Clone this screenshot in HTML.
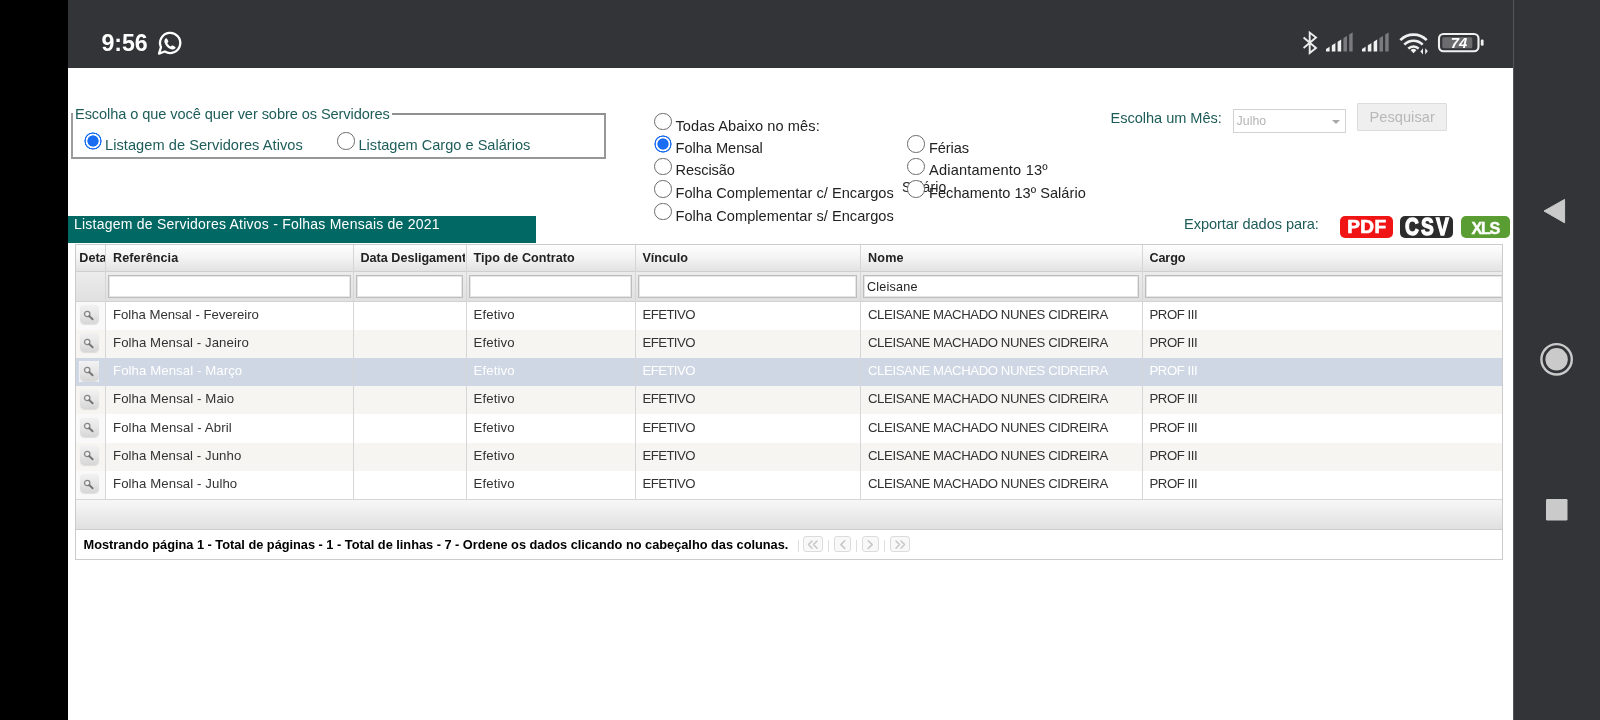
<!DOCTYPE html>
<html><head><meta charset="utf-8"><title>Servidores</title>
<style>
*{box-sizing:border-box;margin:0;padding:0}
html,body{width:1600px;height:720px;overflow:hidden;background:#fff;font-family:"Liberation Sans",sans-serif;}
.abs{position:absolute}
#left{left:0;top:0;width:68px;height:720px;background:#000}
#top{left:68px;top:0;width:1532px;height:68px;background:#333438}
#right{left:1513px;top:0;width:87px;height:720px;background:#333438;border-left:1.5px solid #55565c}
.t{position:absolute;white-space:pre;line-height:1}
.radio{position:absolute;width:17.5px;height:17.5px;border-radius:50%;border:1.2px solid #6a6a6a;background:#fff}
.radio.on{border:none;background:radial-gradient(circle at 50% 50%,#1a6df2 0,#1a6df2 5.3px,#fff 5.9px,#fff 7px,#1a6df2 7.6px,#1a6df2 8.3px,rgba(26,109,242,0) 8.9px)}
.inp{position:absolute;top:274.5px;height:23.5px;background:#fff;border:1.5px solid #bdbdbd;box-shadow:inset 0 0 0 1px #e6e6e6}
.ib{position:absolute;left:79.5px;width:19px;height:19px;border-radius:4.5px;background:linear-gradient(#f1f1f1,#e6e6e6 50%,#d6d6d6);box-shadow:0 0.5px 1px rgba(0,0,0,.10)}
.pb{position:absolute;top:536.2px;height:16.3px;border:1.3px solid #dcdcdc;border-radius:3px;background:#f8f8f8}
.ps{position:absolute;top:539.5px;width:1.3px;height:12px;background:#dedede}
</style></head><body><div id="wrap" style="position:absolute;left:0;top:0;width:1600px;height:720px;will-change:transform">
<div id="left" class="abs"></div>
<div id="top" class="abs"></div>
<div id="right" class="abs"></div>

<!-- status icons -->
<svg class="abs" style="left:0;top:0" width="1600" height="720" viewBox="0 0 1600 720">
  <!-- whatsapp -->
  <g transform="translate(-1.2 0.6)"><g fill="none" stroke="#fff" stroke-width="2.3" stroke-linejoin="round">
    <path d="M160.2 53 L162.2 46.6 A10.1 10.1 0 1 1 166 50.9 Z"/>
  </g>
  <path transform="translate(171.2 41.8) scale(0.88) translate(-171.2 -41.8)" d="M166 37.6 c0.6 -0.6 1.6 -0.5 2 0.2 l1.2 2.4 c0.3 0.6 0.1 1.2 -0.4 1.6 l-0.8 0.7 c0.8 1.8 2.3 3.2 4.2 4.1 l0.8 -0.9 c0.4 -0.5 1.1 -0.6 1.6 -0.3 l2.3 1.3 c0.7 0.4 0.8 1.4 0.2 2 c-1.2 1.3 -3 1.6 -4.7 0.9 c-3.6 -1.4 -6.3 -4.2 -7.4 -7.8 c-0.5 -1.6 -0.1 -3.2 1 -4.2z" fill="#fff"/></g>
  <!-- bluetooth -->
  <path d="M1303.6 37.6 L1316 48 L1309.7 53 L1309.7 32.6 L1316 37.6 L1303.6 48" fill="none" stroke="#ececec" stroke-width="1.9" stroke-linejoin="miter"/>
  <!-- signal 1 -->
  <g>
    <clipPath id="s1"><path d="M1326 51.6 L1326 48.9 L1352.8 32.2 L1352.8 51.6 Z"/></clipPath>
    <g clip-path="url(#s1)">
      <rect x="1326" y="30" width="3.6" height="22" fill="#f0f0f0"/>
      <rect x="1331.8" y="30" width="3.6" height="22" fill="#f0f0f0"/>
      <rect x="1337.6" y="30" width="3.6" height="22" fill="#f0f0f0"/>
      <rect x="1343.4" y="30" width="3.6" height="22" fill="#7b7b7d"/>
      <rect x="1349.2" y="30" width="3.6" height="22" fill="#7b7b7d"/>
    </g>
    <clipPath id="s2"><path d="M1362 51.6 L1362 48.9 L1388.8 32.2 L1388.8 51.6 Z"/></clipPath>
    <g clip-path="url(#s2)">
      <rect x="1362" y="30" width="3.6" height="22" fill="#f0f0f0"/>
      <rect x="1367.8" y="30" width="3.6" height="22" fill="#f0f0f0"/>
      <rect x="1373.6" y="30" width="3.6" height="22" fill="#f0f0f0"/>
      <rect x="1379.4" y="30" width="3.6" height="22" fill="#7b7b7d"/>
      <rect x="1385.2" y="30" width="3.6" height="22" fill="#7b7b7d"/>
    </g>
  </g>
  <!-- wifi -->
  <g fill="none" stroke="#f0f0f0" stroke-width="2.6" stroke-linecap="butt">
    <path d="M1400.3 40.2 A18.5 18.5 0 0 1 1426.7 40.2"/>
    <path d="M1404.3 44.6 A12.8 12.8 0 0 1 1422.7 44.6"/>
    <path d="M1408.3 48.7 A7.2 7.2 0 0 1 1418.7 48.7"/>
  </g>
  <path d="M1413.5 53.2 L1410.6 50.2 A4.1 4.1 0 0 1 1416.4 50.2 Z" fill="#f0f0f0"/>
  <rect x="1419.5" y="46.5" width="10" height="9" fill="#333438"/>
  <path d="M1423 48.2 v6.2 l-2.6 -2.8z M1425.2 54.4 v-6.2 l2.6 2.8z" fill="#f0f0f0"/>
  <!-- battery -->
  <rect x="1439" y="34" width="39.5" height="17.3" rx="4.5" fill="none" stroke="#f0f0f0" stroke-width="2.1"/>
  <rect x="1442.3" y="37.2" width="30" height="11" rx="1.5" fill="#6c6c6e"/>
  <rect x="1480.8" y="39.6" width="2.8" height="6.2" rx="1.2" fill="#f0f0f0"/>
  <!-- nav -->
  <path d="M1544 211 L1564.6 199.4 L1564.6 222.8 Z" fill="#cacaca" stroke="#cacaca" stroke-width="1" stroke-linejoin="round"/>
  <circle cx="1556.6" cy="359.3" r="15.2" fill="none" stroke="#cacaca" stroke-width="2.4"/>
  <circle cx="1556.6" cy="359.3" r="11.2" fill="#cacaca"/>
  <rect x="1546" y="499" width="21.5" height="21.5" rx="1.2" fill="#cacaca"/>
</svg>

<!-- fieldset -->
<div class="abs" style="left:71px;top:113.2px;width:535px;height:45.6px;border:2px solid #979797;border-left-color:#9d9d9d;border-top-color:#909090"></div>
<div class="abs" style="left:73px;top:108px;width:318.6px;height:12px;background:#fff"></div>
<div class="radio on" style="left:84px;top:132px"></div>
<div class="radio" style="left:337px;top:132px"></div>

<!-- middle radios -->
<div class="radio" style="left:654px;top:112.5px"></div>
<div class="radio on" style="left:654px;top:135px"></div>
<div class="radio" style="left:654px;top:157.5px"></div>
<div class="radio" style="left:654px;top:180px"></div>
<div class="radio" style="left:654px;top:202.5px"></div>
<div class="radio" style="left:907px;top:135px"></div>
<div class="radio" style="left:907px;top:157.5px"></div>
<div class="radio" style="left:907px;top:180px;z-index:5"></div>

<!-- select + button -->
<div class="abs" style="left:1232.5px;top:108.5px;width:113.5px;height:24.5px;border:1.5px solid #d2d2d2;background:#fff"></div>
<div class="abs" style="left:1331.5px;top:119.5px;width:0;height:0;border-left:4px solid transparent;border-right:4px solid transparent;border-top:4.5px solid #a8a8a8"></div>
<div class="abs" style="left:1357px;top:102.8px;width:89.5px;height:28.2px;border:1.5px solid #dcdcdc;background:#efefef;border-radius:1px"></div>

<!-- export buttons -->
<div class="abs" style="left:1340px;top:216.3px;width:52.8px;height:22px;background:#f01414;border-radius:5px"></div>
<div class="abs" style="left:1400.3px;top:216.3px;width:52.8px;height:22px;background:#2c2c2c;border-radius:5px"></div>
<div class="abs" style="left:1460.5px;top:216.3px;width:49.7px;height:22px;background:#5a9e33;border-radius:5px"></div>

<svg id="csv" class="abs" style="left:1400px;top:212px" width="56" height="30" viewBox="1400 212 56 30"><text transform="translate(1404.9 235.2) scale(0.8 1)" x="0" y="0" font-family="Liberation Sans, sans-serif" font-size="24" font-weight="bold" fill="#fff" stroke="#fff" stroke-width="1.3" textLength="55" lengthAdjust="spacing">CSV</text></svg>
<!-- title bar -->
<div class="abs" style="left:68px;top:216px;width:467.5px;height:26.8px;background:#026864"></div>

<!-- table -->
<div id="tbl" class="abs" style="left:75px;top:244px;width:1428px;height:316px;border:1px solid #ccc;background:#fff"></div>
<div class="abs" style="left:76px;top:245px;width:1426px;height:27.2px;background:linear-gradient(#fefefe,#f3f3f3 50%,#e2e2e2);border-bottom:1px solid #cfcfcf"></div>
<div class="abs" style="left:76px;top:272.2px;width:1426px;height:29.6px;background:linear-gradient(#ececec,#e0e0e0);border-bottom:1px solid #d2d2d2"></div>

<div class="abs" style="left:76px;top:301.80px;width:1426px;height:28.17px;background:#fff"></div>
<div class="abs" style="left:76px;top:301.80px;width:29px;height:28.17px;background:#f9f9f9"></div>
<div class="ib" style="top:305.20px"></div>
<svg class="abs" style="left:81.80px;top:308.60px" width="14" height="14" viewBox="0 0 14 14"><circle cx="5.2" cy="5" r="2.7" fill="#f0f0f0" stroke="#858585" stroke-width="1.3"/><path d="M7.3 7.1 L10.6 10.3" stroke="#737373" stroke-width="1.9" stroke-linecap="round"/></svg>
<div class="abs" style="left:76px;top:329.97px;width:1426px;height:28.17px;background:#f6f5f1"></div>
<div class="ib" style="top:333.37px"></div>
<svg class="abs" style="left:81.80px;top:336.77px" width="14" height="14" viewBox="0 0 14 14"><circle cx="5.2" cy="5" r="2.7" fill="#f0f0f0" stroke="#858585" stroke-width="1.3"/><path d="M7.3 7.1 L10.6 10.3" stroke="#737373" stroke-width="1.9" stroke-linecap="round"/></svg>
<div class="abs" style="left:76px;top:358.14px;width:1426px;height:28.17px;background:#cfd6e4"></div>
<div class="abs" style="left:78.6px;top:360.94px;width:20.8px;height:21px;background:rgba(255,255,255,.7)"></div>
<div class="ib" style="top:361.54px"></div>
<svg class="abs" style="left:81.80px;top:364.94px" width="14" height="14" viewBox="0 0 14 14"><circle cx="5.2" cy="5" r="2.7" fill="#f0f0f0" stroke="#858585" stroke-width="1.3"/><path d="M7.3 7.1 L10.6 10.3" stroke="#737373" stroke-width="1.9" stroke-linecap="round"/></svg>
<div class="abs" style="left:76px;top:386.31px;width:1426px;height:28.17px;background:#f6f5f1"></div>
<div class="ib" style="top:389.71px"></div>
<svg class="abs" style="left:81.80px;top:393.11px" width="14" height="14" viewBox="0 0 14 14"><circle cx="5.2" cy="5" r="2.7" fill="#f0f0f0" stroke="#858585" stroke-width="1.3"/><path d="M7.3 7.1 L10.6 10.3" stroke="#737373" stroke-width="1.9" stroke-linecap="round"/></svg>
<div class="abs" style="left:76px;top:414.48px;width:1426px;height:28.17px;background:#fff"></div>
<div class="abs" style="left:76px;top:414.48px;width:29px;height:28.17px;background:#f9f9f9"></div>
<div class="ib" style="top:417.88px"></div>
<svg class="abs" style="left:81.80px;top:421.28px" width="14" height="14" viewBox="0 0 14 14"><circle cx="5.2" cy="5" r="2.7" fill="#f0f0f0" stroke="#858585" stroke-width="1.3"/><path d="M7.3 7.1 L10.6 10.3" stroke="#737373" stroke-width="1.9" stroke-linecap="round"/></svg>
<div class="abs" style="left:76px;top:442.65px;width:1426px;height:28.17px;background:#f6f5f1"></div>
<div class="ib" style="top:446.05px"></div>
<svg class="abs" style="left:81.80px;top:449.45px" width="14" height="14" viewBox="0 0 14 14"><circle cx="5.2" cy="5" r="2.7" fill="#f0f0f0" stroke="#858585" stroke-width="1.3"/><path d="M7.3 7.1 L10.6 10.3" stroke="#737373" stroke-width="1.9" stroke-linecap="round"/></svg>
<div class="abs" style="left:76px;top:470.82px;width:1426px;height:28.17px;background:#fff"></div>
<div class="abs" style="left:76px;top:470.82px;width:29px;height:28.17px;background:#f9f9f9"></div>
<div class="ib" style="top:474.22px"></div>
<svg class="abs" style="left:81.80px;top:477.62px" width="14" height="14" viewBox="0 0 14 14"><circle cx="5.2" cy="5" r="2.7" fill="#f0f0f0" stroke="#858585" stroke-width="1.3"/><path d="M7.3 7.1 L10.6 10.3" stroke="#737373" stroke-width="1.9" stroke-linecap="round"/></svg>
<div class="abs" style="left:105px;top:245px;width:1px;height:254.5px;background:#d6d6d6"></div>
<div class="abs" style="left:353px;top:245px;width:1px;height:254.5px;background:#d6d6d6"></div>
<div class="abs" style="left:466px;top:245px;width:1px;height:254.5px;background:#d6d6d6"></div>
<div class="abs" style="left:635px;top:245px;width:1px;height:254.5px;background:#d6d6d6"></div>
<div class="abs" style="left:860px;top:245px;width:1px;height:254.5px;background:#d6d6d6"></div>
<div class="abs" style="left:1142px;top:245px;width:1px;height:254.5px;background:#d6d6d6"></div>
<div class="abs" style="left:76px;top:499px;width:1426px;height:1px;background:#d6d6d6"></div>
<div class="abs" style="left:76px;top:500px;width:1426px;height:29.8px;background:linear-gradient(#f7f7f7,#ececec 50%,#e0e0e0);border-bottom:1px solid #cdcdcd"></div>
<div class="inp" style="left:108px;width:242.8px;"></div>
<div class="inp" style="left:356px;width:107.0px;"></div>
<div class="inp" style="left:469px;width:162.7px;"></div>
<div class="inp" style="left:638px;width:219.0px;"></div>
<div class="inp" style="left:863px;width:276.0px;"></div>
<div class="inp" style="left:1145px;width:357.0px;border-right:none;"></div>
<div class="pb" style="left:803px;width:20.0px"></div>
<div class="pb" style="left:834px;width:17.3px"></div>
<div class="pb" style="left:861.5px;width:17.3px"></div>
<div class="pb" style="left:890px;width:19.8px"></div>
<div class="ps" style="left:797.5px"></div>
<div class="ps" style="left:827.8px"></div>
<div class="ps" style="left:856px"></div>
<div class="ps" style="left:883.8px"></div>
<svg class="abs" style="left:800px;top:532px" width="120" height="26" viewBox="800 532 120 26" fill="none" stroke="#c6c6c6" stroke-width="1.5" stroke-linecap="round" stroke-linejoin="round">
<path d="M812 541 L808.5 544.6 L812 548.2 M817 541 L813.5 544.6 L817 548.2"/>
<path d="M844.8 540.8 L840.8 544.6 L844.8 548.4"/>
<path d="M868.2 540.8 L872.2 544.6 L868.2 548.4"/>
<path d="M896 541 L899.5 544.6 L896 548.2 M901 541 L904.5 544.6 L901 548.2"/>
</svg>
<div class="t" style="left:101.50px;top:32.46px;font-size:23.2px;color:#fff;font-weight:bold;letter-spacing:-0.105px;">9:56</div>
<div class="t" style="left:75.00px;top:107.14px;font-size:14.6px;color:#1d5c58;letter-spacing:-0.085px;">Escolha o que você quer ver sobre os Servidores</div>
<div class="t" style="left:105.00px;top:138.24px;font-size:14.6px;color:#1d5c58;letter-spacing:0.051px;">Listagem de Servidores Ativos</div>
<div class="t" style="left:358.50px;top:138.24px;font-size:14.6px;color:#1d5c58;letter-spacing:-0.007px;">Listagem Cargo e Salários</div>
<div class="t" style="left:675.50px;top:118.54px;font-size:14.6px;color:#222;letter-spacing:0.076px;">Todas Abaixo no mês:</div>
<div class="t" style="left:675.50px;top:140.84px;font-size:14.6px;color:#222;letter-spacing:-0.026px;">Folha Mensal</div>
<div class="t" style="left:675.50px;top:163.34px;font-size:14.6px;color:#222;letter-spacing:-0.091px;">Rescisão</div>
<div class="t" style="left:675.50px;top:186.04px;font-size:14.6px;color:#222;letter-spacing:0.030px;">Folha Complementar c/ Encargos</div>
<div class="t" style="left:675.50px;top:208.54px;font-size:14.6px;color:#222;letter-spacing:0.030px;">Folha Complementar s/ Encargos</div>
<div class="t" style="left:929.00px;top:140.84px;font-size:14.6px;color:#222;letter-spacing:-0.124px;">Férias</div>
<div class="t" style="left:929.00px;top:163.34px;font-size:14.6px;color:#222;letter-spacing:0.195px;">Adiantamento 13º</div>
<div class="t" style="left:902.00px;top:180.45px;font-size:14px;color:#222;letter-spacing:0.101px;">Salário</div>
<div class="t" style="left:929.00px;top:186.04px;font-size:14.6px;color:#222;letter-spacing:0.026px;">Fechamento 13º Salário</div>
<div class="t" style="left:1110.50px;top:110.94px;font-size:14.6px;color:#1d5c58;letter-spacing:-0.043px;">Escolha um Mês:</div>
<div class="t" style="left:1236.50px;top:115.09px;font-size:12.3px;color:#b4b4b4;letter-spacing:0.079px;">Julho</div>
<div class="t" style="left:1369.50px;top:110.44px;font-size:14.6px;color:#b8b8b8;letter-spacing:0.044px;">Pesquisar</div>
<div class="t" style="left:1184.00px;top:217.44px;font-size:14.6px;color:#1d5c58;letter-spacing:-0.075px;">Exportar dados para:</div>
<div class="t" style="left:74.00px;top:217.15px;font-size:14px;color:#fff;letter-spacing:0.232px;">Listagem de Servidores Ativos - Folhas Mensais de 2021</div>
<div class="t" style="left:79.30px;top:251.83px;font-size:12.6px;color:#222;font-weight:bold;width:25.7px;overflow:hidden;height:16.4px;">Detalhes</div>
<div class="t" style="left:113.00px;top:251.83px;font-size:12.6px;color:#222;font-weight:bold;letter-spacing:0.089px;">Referência</div>
<div class="t" style="left:360.50px;top:251.83px;font-size:12.6px;color:#222;font-weight:bold;width:104.5px;overflow:hidden;height:16.4px;">Data Desligamento</div>
<div class="t" style="left:473.50px;top:251.83px;font-size:12.6px;color:#222;font-weight:bold;letter-spacing:0.049px;">Tipo de Contrato</div>
<div class="t" style="left:642.50px;top:251.83px;font-size:12.6px;color:#222;font-weight:bold;letter-spacing:-0.026px;">Vínculo</div>
<div class="t" style="left:868.00px;top:251.83px;font-size:12.6px;color:#222;font-weight:bold;letter-spacing:0.200px;">Nome</div>
<div class="t" style="left:1149.50px;top:251.83px;font-size:12.6px;color:#222;font-weight:bold;letter-spacing:-0.118px;">Cargo</div>
<div class="t" style="left:867.00px;top:280.63px;font-size:12.6px;color:#222;letter-spacing:0.223px;">Cleisane</div>
<div class="t" style="left:113.00px;top:307.93px;font-size:13.2px;color:#333;letter-spacing:-0.033px;">Folha Mensal - Fevereiro</div>
<div class="t" style="left:473.50px;top:307.93px;font-size:13.2px;color:#333;letter-spacing:0.139px;">Efetivo</div>
<div class="t" style="left:642.50px;top:307.93px;font-size:13.2px;color:#333;letter-spacing:-0.589px;">EFETIVO</div>
<div class="t" style="left:868.00px;top:307.93px;font-size:13.2px;color:#333;letter-spacing:-0.420px;">CLEISANE MACHADO NUNES CIDREIRA</div>
<div class="t" style="left:1149.50px;top:307.93px;font-size:13.2px;color:#333;letter-spacing:-0.437px;">PROF III</div>
<div class="t" style="left:113.00px;top:336.10px;font-size:13.2px;color:#333;letter-spacing:0.075px;">Folha Mensal - Janeiro</div>
<div class="t" style="left:473.50px;top:336.10px;font-size:13.2px;color:#333;letter-spacing:0.139px;">Efetivo</div>
<div class="t" style="left:642.50px;top:336.10px;font-size:13.2px;color:#333;letter-spacing:-0.589px;">EFETIVO</div>
<div class="t" style="left:868.00px;top:336.10px;font-size:13.2px;color:#333;letter-spacing:-0.420px;">CLEISANE MACHADO NUNES CIDREIRA</div>
<div class="t" style="left:1149.50px;top:336.10px;font-size:13.2px;color:#333;letter-spacing:-0.437px;">PROF III</div>
<div class="t" style="left:113.00px;top:364.27px;font-size:13.2px;color:#fff;letter-spacing:0.088px;">Folha Mensal - Março</div>
<div class="t" style="left:473.50px;top:364.27px;font-size:13.2px;color:#fff;letter-spacing:0.139px;">Efetivo</div>
<div class="t" style="left:642.50px;top:364.27px;font-size:13.2px;color:#fff;letter-spacing:-0.589px;">EFETIVO</div>
<div class="t" style="left:868.00px;top:364.27px;font-size:13.2px;color:#fff;letter-spacing:-0.420px;">CLEISANE MACHADO NUNES CIDREIRA</div>
<div class="t" style="left:1149.50px;top:364.27px;font-size:13.2px;color:#fff;letter-spacing:-0.437px;">PROF III</div>
<div class="t" style="left:113.00px;top:392.44px;font-size:13.2px;color:#333;letter-spacing:0.096px;">Folha Mensal - Maio</div>
<div class="t" style="left:473.50px;top:392.44px;font-size:13.2px;color:#333;letter-spacing:0.139px;">Efetivo</div>
<div class="t" style="left:642.50px;top:392.44px;font-size:13.2px;color:#333;letter-spacing:-0.589px;">EFETIVO</div>
<div class="t" style="left:868.00px;top:392.44px;font-size:13.2px;color:#333;letter-spacing:-0.420px;">CLEISANE MACHADO NUNES CIDREIRA</div>
<div class="t" style="left:1149.50px;top:392.44px;font-size:13.2px;color:#333;letter-spacing:-0.437px;">PROF III</div>
<div class="t" style="left:113.00px;top:420.61px;font-size:13.2px;color:#333;letter-spacing:0.113px;">Folha Mensal - Abril</div>
<div class="t" style="left:473.50px;top:420.61px;font-size:13.2px;color:#333;letter-spacing:0.139px;">Efetivo</div>
<div class="t" style="left:642.50px;top:420.61px;font-size:13.2px;color:#333;letter-spacing:-0.589px;">EFETIVO</div>
<div class="t" style="left:868.00px;top:420.61px;font-size:13.2px;color:#333;letter-spacing:-0.420px;">CLEISANE MACHADO NUNES CIDREIRA</div>
<div class="t" style="left:1149.50px;top:420.61px;font-size:13.2px;color:#333;letter-spacing:-0.437px;">PROF III</div>
<div class="t" style="left:113.00px;top:448.78px;font-size:13.2px;color:#333;letter-spacing:0.074px;">Folha Mensal - Junho</div>
<div class="t" style="left:473.50px;top:448.78px;font-size:13.2px;color:#333;letter-spacing:0.139px;">Efetivo</div>
<div class="t" style="left:642.50px;top:448.78px;font-size:13.2px;color:#333;letter-spacing:-0.589px;">EFETIVO</div>
<div class="t" style="left:868.00px;top:448.78px;font-size:13.2px;color:#333;letter-spacing:-0.420px;">CLEISANE MACHADO NUNES CIDREIRA</div>
<div class="t" style="left:1149.50px;top:448.78px;font-size:13.2px;color:#333;letter-spacing:-0.437px;">PROF III</div>
<div class="t" style="left:113.00px;top:476.95px;font-size:13.2px;color:#333;letter-spacing:0.094px;">Folha Mensal - Julho</div>
<div class="t" style="left:473.50px;top:476.95px;font-size:13.2px;color:#333;letter-spacing:0.139px;">Efetivo</div>
<div class="t" style="left:642.50px;top:476.95px;font-size:13.2px;color:#333;letter-spacing:-0.589px;">EFETIVO</div>
<div class="t" style="left:868.00px;top:476.95px;font-size:13.2px;color:#333;letter-spacing:-0.420px;">CLEISANE MACHADO NUNES CIDREIRA</div>
<div class="t" style="left:1149.50px;top:476.95px;font-size:13.2px;color:#333;letter-spacing:-0.437px;">PROF III</div>
<div class="t" style="left:83.50px;top:538.76px;font-size:12.8px;color:#000;font-weight:bold;letter-spacing:-0.019px;">Mostrando página 1 - Total de páginas - 1 - Total de linhas - 7 - Ordene os dados clicando no cabeçalho das colunas.</div>
<div class="t" style="left:1347.20px;top:217.12px;font-size:19px;color:#fff;font-weight:bold;letter-spacing:0.500px;-webkit-text-stroke:0.7px #fff;">PDF</div>
<div class="t" style="left:1471.60px;top:220.09px;font-size:16.2px;color:#fff;font-weight:bold;letter-spacing:-1.395px;-webkit-text-stroke:0.4px #fff;">XLS</div>
<div class="t" style="left:1450.80px;top:35.87px;font-size:14.8px;color:#fff;font-weight:bold;letter-spacing:0.016px;font-style:italic;">74</div>
</div></body></html>
